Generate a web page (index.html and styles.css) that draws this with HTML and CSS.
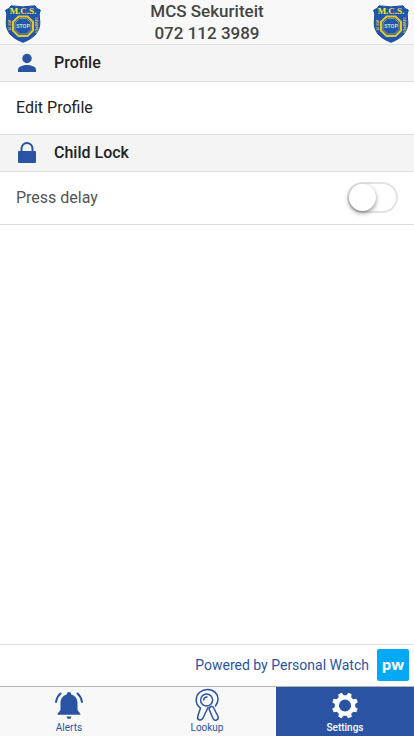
FILE: index.html
```html
<!DOCTYPE html>
<html lang="en">
<head>
    <meta charset="UTF-8">
    <meta name="viewport" content="width=device-width, initial-scale=1">
    <title>Settings</title>
    <link rel="stylesheet" href="styles.css">
</head>
<body>
    <header class="header">
        <svg class="badge" viewBox="0 0 36 40">
            <path d="M6 1.800Q18 4 30 1.800Q31 5 35.300 6Q33.500 10 34.500 15C36 25 32 33 18 38.300C4 33 0 25 1.500 15Q2.500 10 .7 6Q5 5 6 1.800Z" fill="#1f56b0" stroke="#164994"/>
            <path d="M13.500 12.500H22.500L28 18V26.500L22.500 32H13.500L8 26.500V18Z" fill="#2458a8" stroke="#e6c62c" stroke-width="2"/>
            <path d="M14.500 14.500H21.500L26 19V25.500L21.500 30H14.500L10 25.500V19Z" fill="#2158ad" stroke="#8e9870"/>
            <text class="badge-name" x="18" y="10">M.C.S.</text>
            <text class="badge-stop" x="18" y="24">STOP</text>
            <text class="badge-side" transform="translate(6 21) rotate(-90)">24 UUR</text>
            <text class="badge-side" transform="translate(30 21) rotate(90)">GEWAPEN</text>
        </svg>
        <h1 class="title">MCS Sekuriteit<br>072 112 3989</h1>
        <svg class="badge" viewBox="0 0 36 40">
            <path d="M6 1.800Q18 4 30 1.800Q31 5 35.300 6Q33.500 10 34.500 15C36 25 32 33 18 38.300C4 33 0 25 1.500 15Q2.500 10 .7 6Q5 5 6 1.800Z" fill="#1f56b0" stroke="#164994"/>
            <path d="M13.500 12.500H22.500L28 18V26.500L22.500 32H13.500L8 26.500V18Z" fill="#2458a8" stroke="#e6c62c" stroke-width="2"/>
            <path d="M14.500 14.500H21.500L26 19V25.500L21.500 30H14.500L10 25.500V19Z" fill="#2158ad" stroke="#8e9870"/>
            <text class="badge-name" x="18" y="10">M.C.S.</text>
            <text class="badge-stop" x="18" y="24">STOP</text>
            <text class="badge-side" transform="translate(6 21) rotate(-90)">24 UUR</text>
            <text class="badge-side" transform="translate(30 21) rotate(90)">GEWAPEN</text>
        </svg>
    </header>
    <main class="content">
        <h2 class="divider">
            <svg class="divider-icon" viewBox="0 0 22 22">
                <circle cx="11" cy="7.500" r="4.700"/>
                <path d="M2 21V18.500C2 15.500 7 14 11 14S20 15.500 20 18.500V21Z"/>
            </svg>
            Profile
        </h2>
        <a class="item" href="#profile">Edit Profile</a>
        <h2 class="divider">
            <svg class="divider-icon" viewBox="0 0 22 22">
                <path d="M3 10H4.500V7.500A6.500 6.500 0 0 1 17.500 7.500V10H19Q20 10 20 11V21Q20 22 19 22H3Q2 22 2 21V11Q2 10 3 10ZM6.500 10H15.500V7.500A4.500 4.500 0 0 0 6.500 7.500Z"/>
            </svg>
            Child Lock
        </h2>
        <div class="item">
            <label class="item-label" for="pressDelay">Press delay</label>
            <input id="pressDelay" class="toggle" type="checkbox" role="switch">
        </div>
    </main>
    <footer class="powered">
        <a href="#powered">Powered by Personal Watch</a>
        <span class="pw-logo">pw</span>
    </footer>
    <nav class="tabs">
        <a class="tab" href="#alerts">
            <svg class="tab-icon" viewBox="0 0 30 34">
                <path class="solid" d="M15 4C16.500 4 17.200 5 17.200 6.500C21 7.500 23.500 10.500 23.500 15V21C23.500 23.500 26.500 24.500 26.500 26.700H3.500C3.500 24.500 6.500 23.500 6.500 21V15C6.500 10.500 9 7.500 12.800 6.500C12.800 5 13.500 4 15 4ZM12.500 28.500H17.500Q17 31 15 31Q13 31 12.500 28.500Z"/>
                <path class="alarm" d="M6.500 5.500Q3 8.500 2 14M23.500 5.500Q27 8.500 28 14"/>
            </svg>
            Alerts
        </a>
        <a class="tab" href="#lookup">
            <svg class="tab-icon" viewBox="0 0 30 34">
                <path class="line" d="M16 19.500L11 30Q9.500 32.500 7.500 32Q5.200 31.500 5.700 28.500L8.500 20C5 17.500 4 14.500 4.200 11.500C4.500 5.500 9.500 1.500 15.500 1.500C22 1.500 26 6 26 11C26 14 25 16 23.500 18"/>
                <circle class="line" cx="14.600" cy="12" r="6"/>
                <path class="line" d="M11.700 12Q12 9 15 9M17.200 21.500Q16.500 19.500 18.700 18.700Q21 18 22 20.500L26 28.500Q27 31 24.500 32Q22 32.800 21 30.500Z"/>
            </svg>
            Lookup
        </a>
        <a class="tab active" href="#settings" aria-current="page">
            <svg class="tab-icon" viewBox="0 0 30 34">
                <path class="solid" transform="rotate(22.5 15 17.5)" fill-rule="evenodd" d="M12.500 7.500L13.200 4.500H16.800L17.500 7.500L20.200 8.600L22.900 6.900L25.600 9.600L23.900 12.300L25 15L28 15.700V19.300L25 20L23.900 22.700L25.600 25.400L22.900 28.100L20.200 26.400L17.500 27.500L16.800 30.500H13.200L12.500 27.500L9.800 26.400L7.100 28.100L4.400 25.400L6.100 22.700L5 20L2 19.300V15.700L5 15L6.100 12.300L4.400 9.600L7.100 6.900L9.800 8.600ZM15 11.500A6 6 0 1 0 15 23.500A6 6 0 1 0 15 11.500Z"/>
            </svg>
            Settings
        </a>
    </nav>
</body>
</html>
```
FILE: styles.css
```css
* {
    box-sizing: border-box;
}
body {
    display: flex;
    flex-direction: column;
    min-height: 100vh;
    margin: 0;
    background-color: #fff;
    font-family: Roboto, "Liberation Sans", sans-serif;
    font-size: 16px;
    color: #222;
}
a {
    color: inherit;
    text-decoration: none;
}
.header {
    display: flex;
    align-items: flex-end;
    justify-content: space-between;
    height: 45px;
    padding: 0 5px;
    background-color: #f8f8f8;
    border-bottom: 1px solid #dedede;
}
.badge {
    width: 36px;
    height: 40px;
    overflow: visible;
}
.badge-name {
    font: bold 9px "Liberation Serif", serif;
    fill: #ffe52c;
    text-anchor: middle;
}
.badge-stop {
    font: bold 5px "Liberation Sans", sans-serif;
    fill: #d9dfbb;
    text-anchor: middle;
}
.badge-side {
    font: bold 3px "Liberation Sans", sans-serif;
    fill: #e6d24a;
    text-anchor: middle;
}
.title {
    margin: 0;
    font-size: 17px;
    font-weight: 500;
    line-height: 22px;
    text-align: center;
    color: #444;
}
.content {
    flex: 1;
}
.divider {
    display: flex;
    align-items: center;
    gap: 16px;
    height: 37px;
    margin: 0;
    padding: 0 16px 2px;
    background-color: #f4f4f4;
    border-bottom: 1px solid #dedede;
    font-size: 16px;
    font-weight: 500;
}
.divider-icon {
    width: 22px;
    height: 22px;
    fill: #2a54a3;
}
.item {
    display: flex;
    align-items: center;
    justify-content: space-between;
    height: 53px;
    padding: 0 16px 2px;
    border-bottom: 1px solid #dedede;
}
.item-label {
    color: #555;
}
.toggle {
    appearance: none;
    width: 51px;
    height: 31px;
    margin: 0;
    border: 2px solid #e3e3e3;
    border-radius: 16px;
    cursor: pointer;
}
.toggle::before {
    content: "";
    display: block;
    width: 27px;
    height: 27px;
    border-radius: 50%;
    background-color: #fff;
    box-shadow: 0 2px 5px rgba(0, 0, 0, 0.4), 0 1px 1px rgba(0, 0, 0, 0.15);
    transition: transform 0.2s;
}
.toggle:checked {
    background-color: #2a54a3;
    border-color: #2a54a3;
}
.toggle:checked::before {
    transform: translateX(20px);
}
.powered {
    display: flex;
    align-items: center;
    justify-content: flex-end;
    gap: 8px;
    height: 42px;
    padding: 0 5px 1px;
    border-top: 1px solid #dedede;
    font-size: 14px;
    color: #2a54a3;
}
.pw-logo {
    width: 32px;
    height: 32px;
    border-radius: 2px;
    background-color: #03a9f4;
    color: #fff;
    font: bold 15px/30px "Open Sans", sans-serif;
    text-align: center;
}
.tabs {
    display: flex;
    height: 50px;
    background-color: #f8f8f8;
    border-top: 1px solid #b2b2b2;
}
.tab {
    display: flex;
    flex: 1;
    flex-direction: column;
    align-items: center;
    padding-top: 1px;
    font-size: 10px;
    line-height: 12px;
    color: #2a54a3;
}
.tab.active {
    background-color: #2a54a3;
    color: #fff;
    font-weight: 500;
}
.tab-icon {
    width: 30px;
    height: 34px;
}
.solid {
    fill: currentColor;
}
.line,
.alarm {
    fill: none;
    stroke: currentColor;
    stroke-width: 1.5px;
    stroke-linecap: round;
    stroke-linejoin: round;
}
.alarm {
    stroke-width: 2px;
}
```
